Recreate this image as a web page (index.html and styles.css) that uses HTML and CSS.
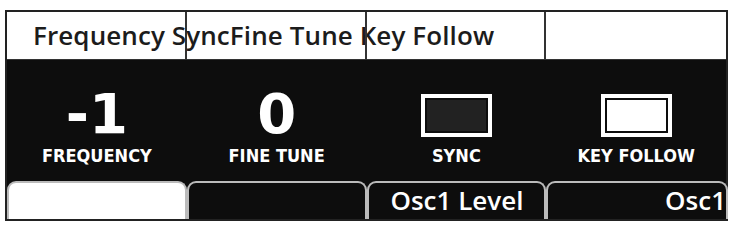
FILE: index.html
```html
<!DOCTYPE html>
<html lang="en">

<head>
  <meta charset="UTF-8" />
  <title>Osc1 Pitch</title>
  <link rel="stylesheet" href="styles.css">
</head>

<body>
  <div class="panel">
    <div class="titles">
      <div class="title-cell"><span class="title-text">Frequency SyncFine Tune Key Follow</span></div>
      <div class="title-cell"></div>
      <div class="title-cell"></div>
      <div class="title-cell"></div>
    </div>

    <div class="params">
      <div class="param">
        <div class="value">-1</div>
        <div class="label">FREQUENCY</div>
      </div>
      <div class="param">
        <div class="value">0</div>
        <div class="label">FINE TUNE</div>
      </div>
      <div class="param">
        <div class="toggle"></div>
        <div class="label">SYNC</div>
      </div>
      <div class="param">
        <div class="toggle on"></div>
        <div class="label">KEY FOLLOW</div>
      </div>
    </div>

    <div class="tabs">
      <div class="tab active"></div>
      <div class="tab"></div>
      <div class="tab">Osc1 Level</div>
      <div class="tab right">Osc1</div>
    </div>
  </div>
</body>

</html>
```

FILE: styles.css
```css
* {
  margin: 0;
  padding: 0;
  box-sizing: border-box;
}

body {
  background: #fff;
  font-family: 'Open Sans', sans-serif;
  overflow: hidden;
}

.panel {
  margin: 10px 0 0 5px;
  width: 723px;
  border: 2px solid #222;
  background: #0d0d0d;
}

/* top title strip */
.titles {
  display: grid;
  grid-template-columns: repeat(4, minmax(0, 1fr));
  height: 48px;
  background: #fff;
  border-bottom: 1px solid #333;
}

.title-cell {
  border-right: 2px solid #333;
  min-width: 0;
}

.title-cell:last-child {
  border-right: none;
}

.title-text {
  display: block;
  white-space: nowrap;
  padding: 5px 0 0 26px;
  font-size: 26px;
  font-weight: 600;
  color: #1c1c1c;
  letter-spacing: 0.1px;
}

/* parameter values */
.params {
  display: grid;
  grid-template-columns: repeat(4, minmax(0, 1fr));
  height: 121px;
}

.param {
  display: flex;
  flex-direction: column;
  align-items: center;
  justify-content: flex-end;
  padding-bottom: 16px;
  color: #fff;
}

.value {
  font-family: 'DejaVu Sans', sans-serif;
  font-weight: bold;
  font-size: 56px;
  line-height: 46px;
  margin-bottom: 10px;
}

.label {
  font-family: 'DejaVu Sans', sans-serif;
  font-stretch: condensed;
  font-weight: bold;
  font-size: 18px;
  line-height: 18px;
}

.toggle {
  width: 71px;
  height: 43px;
  border: 4px solid #fff;
  background: #222;
  box-shadow: inset 0 0 0 2px #0d0d0d;
  margin-bottom: 10px;
}

.toggle.on {
  background: #fff;
}

/* page tabs */
.tabs {
  display: grid;
  grid-template-columns: repeat(4, minmax(0, 1fr));
  height: 38px;
}

.tab {
  border: 2px solid #bbb;
  border-bottom: none;
  border-radius: 9px 9px 0 0;
  padding: 0 0 0 22px;
  font-size: 26px;
  font-weight: 600;
  color: #fff;
  line-height: 34px;
  white-space: nowrap;
  min-width: 0;
}

.tab.active {
  background: #fff;
}

.tab.right {
  text-align: right;
  padding: 0;
  margin-right: -2px;
}
```
